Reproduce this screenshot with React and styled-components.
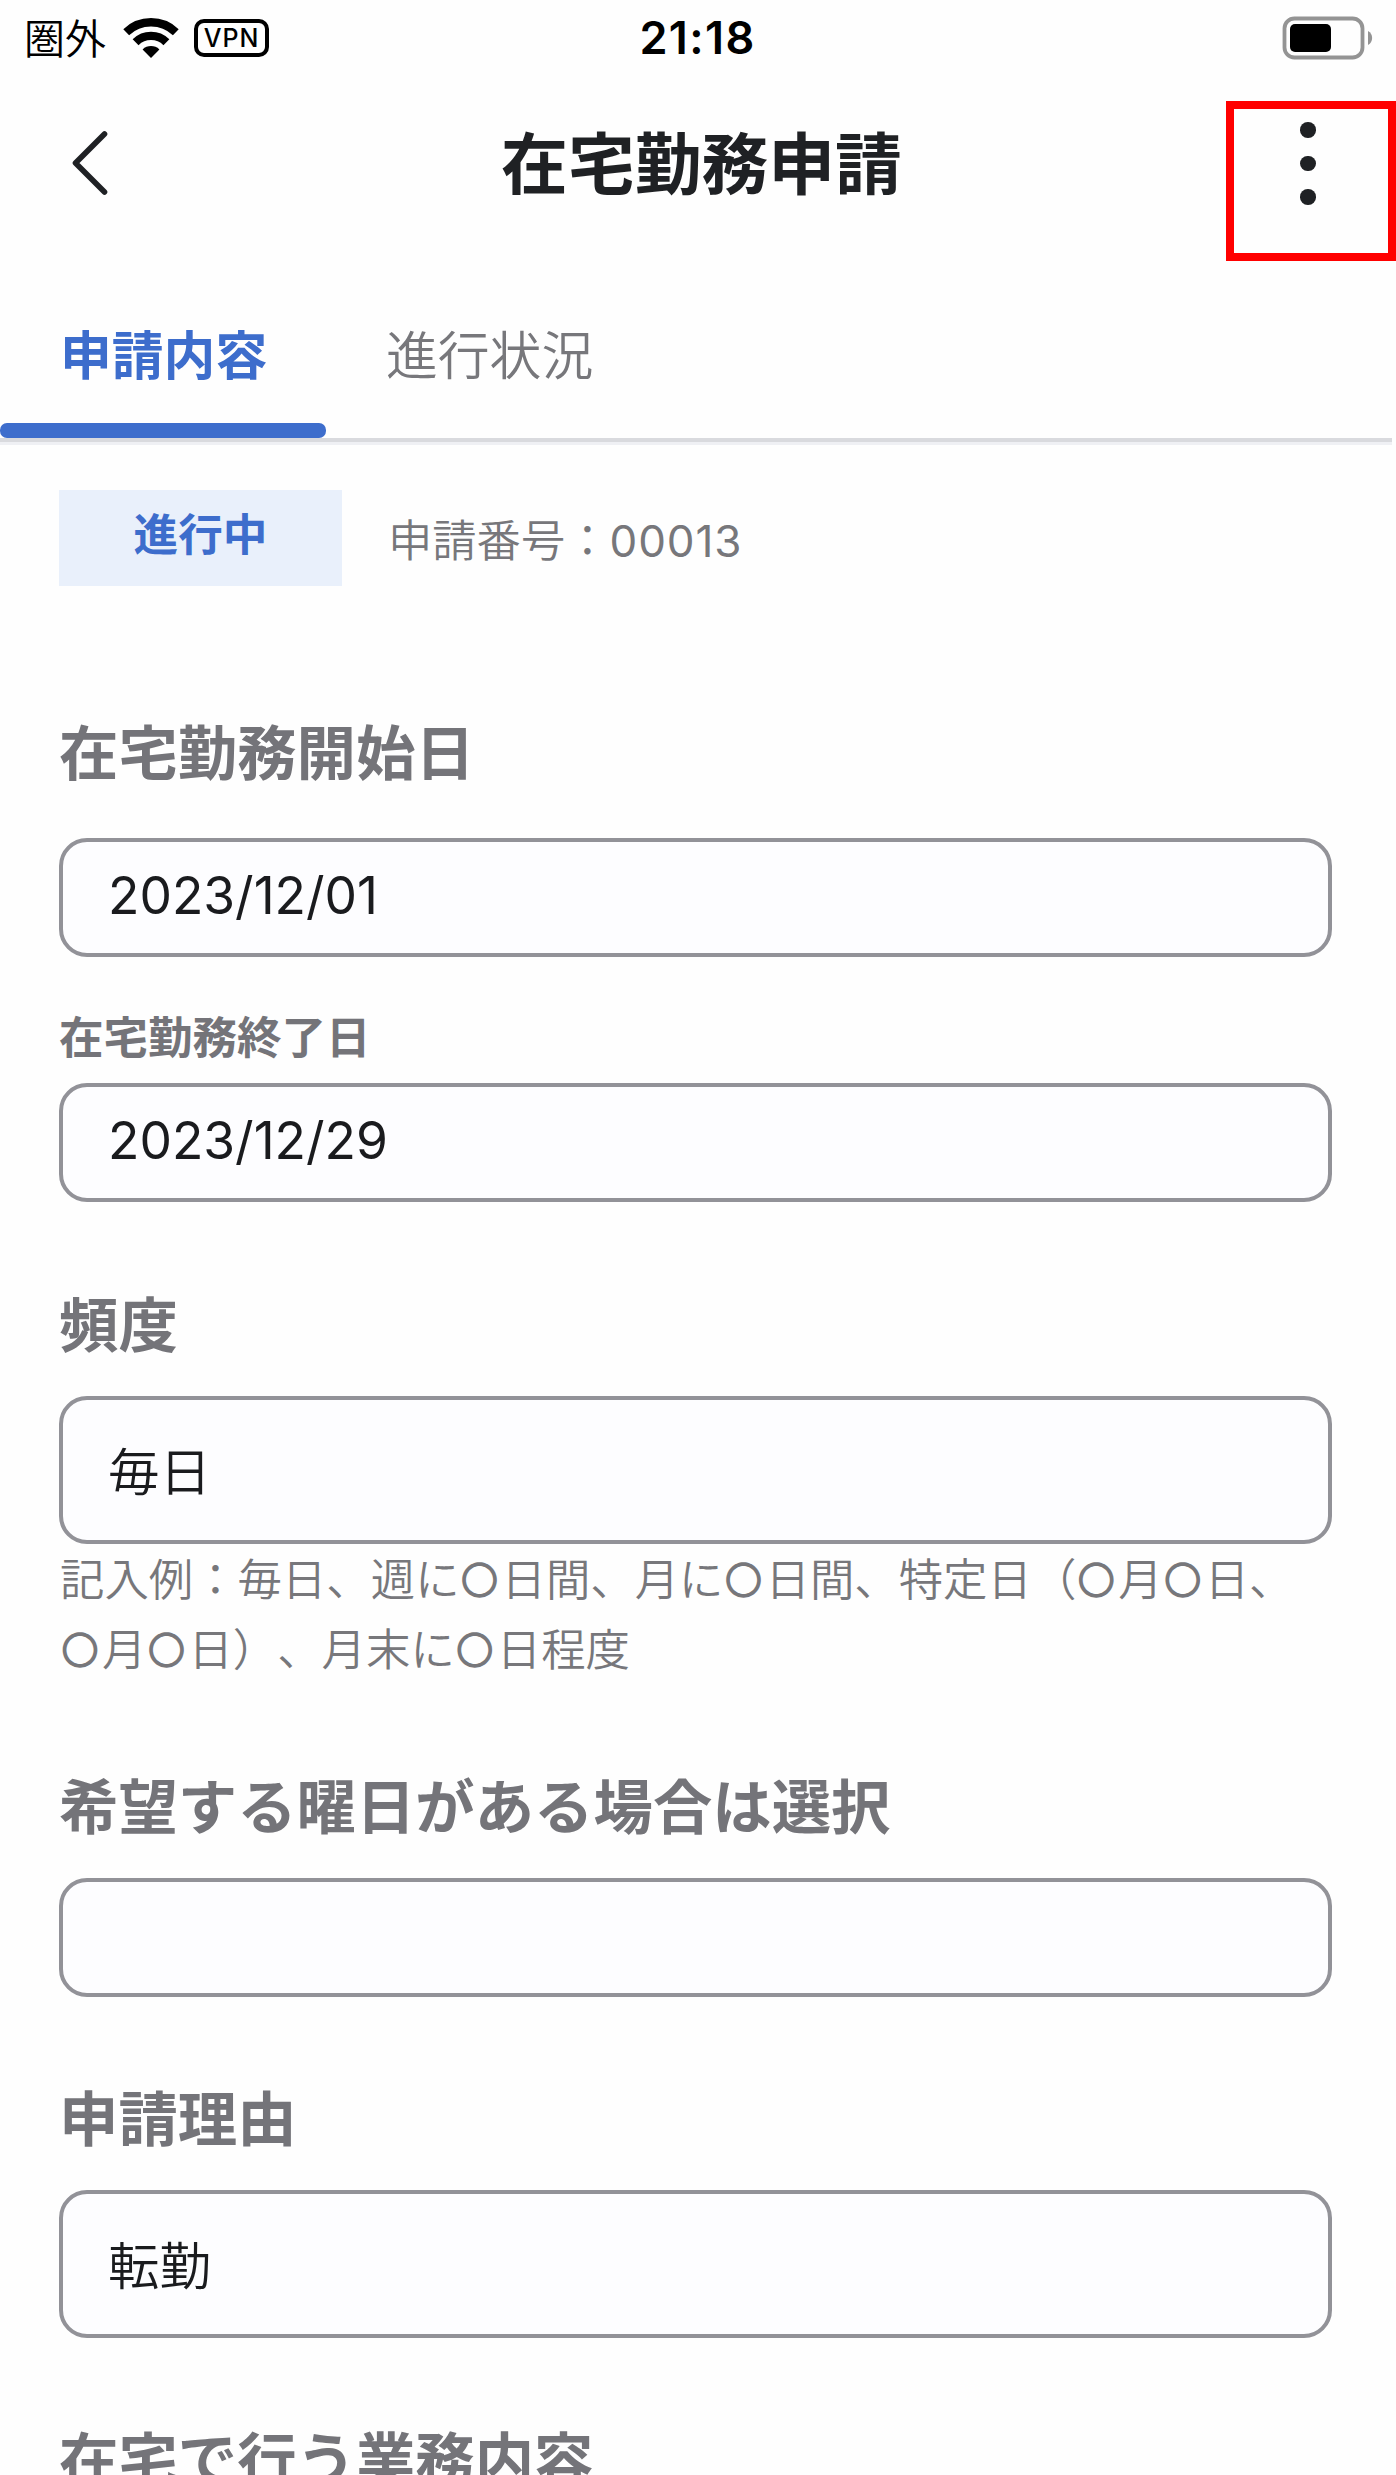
import styled, { createGlobalStyle } from "styled-components";

const App = () => {
  return (
    <Wrapper>
      <GlobalStyle />
      <StatusBar>
        <StatusLeft>
          <Carrier>圏外</Carrier>
          <WifiIcon />
          <Vpn>VPN</Vpn>
        </StatusLeft>
        <Clock>21:18</Clock>
        <StatusRight>
          <BatteryIcon />
        </StatusRight>
      </StatusBar>

      <Header>
        <BackButton aria-label="戻る">
          <svg width="40" height="70" viewBox="0 0 40 70" fill="none">
            <path d="M34.5 6 L5.5 35 L34.5 64" stroke="#1f2124" strokeWidth="5.6" strokeLinecap="round" strokeLinejoin="round" />
          </svg>
        </BackButton>
        <Title>在宅勤務申請</Title>
        <MenuButton aria-label="メニュー">
          <Dot />
          <Dot />
          <Dot />
        </MenuButton>
      </Header>

      <Tabs>
        <Tab $active>申請内容</Tab>
        <Tab>進行状況</Tab>
      </Tabs>
      <Divider />

      <Form>
        <Meta>
          <Badge>進行中</Badge>
          <Number>申請番号：<Digits>00013</Digits></Number>
        </Meta>

        <Heading $top={137} $bottom={55}>在宅勤務開始日</Heading>
        <Field>2023/12/01</Field>
        <Label>在宅勤務終了日</Label>
        <Field>2023/12/29</Field>

        <Heading $top={93}>頻度</Heading>
        <Field $tall>毎日</Field>
        <Hint>
          記入例：毎日、週に<Ring>〇</Ring>日間、月に<Ring>〇</Ring>日間、特定日（<Ring>〇</Ring>月<Ring>〇</Ring>日、
          <br />
          <Ring>〇</Ring>月<Ring>〇</Ring>日）、月末に<Ring>〇</Ring>日程度
        </Hint>

        <Heading $top={94}>希望する曜日がある場合は選択</Heading>
        <Field />

        <Heading>申請理由</Heading>
        <Field $tall>転勤</Field>

        <Heading>在宅で行う業務内容</Heading>
      </Form>
    </Wrapper>
  );
};

const WifiIcon = () => (
  <svg width="56" height="42" viewBox="0 0 56 42">
    <g fill="none" stroke="#000" strokeWidth="8.4">
      <path d="M3.2 15.2 A36 36 0 0 1 52.8 15.2" />
      <path d="M12.6 25.2 A22 22 0 0 1 43.4 25.2" />
    </g>
    <path d="M28 41 L19.6 32.4 A12.4 12.4 0 0 1 36.4 32.4 Z" />
  </svg>
);

const BatteryIcon = () => (
  <svg width="92" height="44" viewBox="0 0 92 44">
    <rect x="2.5" y="2.5" width="78" height="39" rx="10" fill="none" stroke="#949494" strokeWidth="3.8" />
    <rect x="8" y="8" width="41" height="28" rx="5" />
    <path d="M86 15 A8 8 0 0 1 86 29 Z" fill="#949494" />
  </svg>
);

const GlobalStyle = createGlobalStyle`
  * {
    box-sizing: border-box;
  }
  body {
    margin: 0;
    background: #fefefe;
    font-family: Inter, "Noto Sans CJK JP", sans-serif;
    text-spacing-trim: space-all;
  }
`;

const Wrapper = styled.section`
  width: 1396px;
  height: 2475px;
  overflow: hidden;
`;

const StatusBar = styled.div`
  display: grid;
  grid-template-columns: 1fr auto 1fr;
  align-items: center;
  height: 80px;
  padding: 0 22px 5px 24px;
`;

const StatusLeft = styled.div`
  display: flex;
  align-items: center;
`;

const Carrier = styled.span`
  width: 99px;
  padding-bottom: 2px;
  font-size: 41px;
  line-height: 41px;
  font-weight: 350;
  font-family: "Noto Sans CJK JP", sans-serif;
`;

const Vpn = styled.span`
  display: flex;
  align-items: center;
  justify-content: center;
  width: 75px;
  height: 38px;
  margin-left: 15px;
  border: 4px solid #000;
  border-radius: 10px;
  font-size: 25px;
  font-weight: 500;
  letter-spacing: 1px;
`;

const Clock = styled.span`
  margin-right: 3px;
  font-size: 45px;
  font-weight: 600;
  letter-spacing: 1.4px;
`;

const StatusRight = styled.div`
  display: flex;
  justify-content: flex-end;
`;

const Header = styled.header`
  display: grid;
  grid-template-columns: 170px 1fr 170px;
  height: 190px;
  padding-top: 21px;
`;

const BackButton = styled.button`
  align-self: start;
  padding: 27px 0 0 70px;
  border: none;
  background: none;
  text-align: left;
`;

const Title = styled.h1`
  margin: 30px 0 0 7px;
  color: #1f2124;
  font-size: 66.8px;
  line-height: 67px;
  font-weight: 700;
  text-align: center;
`;

const MenuButton = styled.button`
  display: flex;
  flex-direction: column;
  align-items: center;
  gap: 18px;
  height: 160px;
  padding: 13px 6px 0 0;
  border: 8px solid #ff0000;
  background: none;
`;

const Dot = styled.span`
  width: 15.5px;
  height: 15.5px;
  border-radius: 50%;
  background: #1f2124;
`;

const Tabs = styled.nav`
  display: flex;
  height: 168px;
`;

const Tab = styled.div`
  width: 326px;
  padding: 60px 0 0 60px;
  color: ${(props) => (props.$active ? "#3d6dcc" : "#77777b")};
  font-size: 51.8px;
  line-height: 52px;
  font-weight: ${(props) => (props.$active ? 700 : 350)};
  white-space: nowrap;

  &::after {
    content: "";
    display: ${(props) => (props.$active ? "block" : "none")};
    height: 15px;
    margin: 41px 0 0 -60px;
    border-radius: 7px;
    background: #3d6dcc;
  }
`;

const Divider = styled.div`
  width: 1392px;
  height: 7px;
  border-top: 4px solid #d9dade;
  background: #eff0f4;
`;

const Form = styled.main`
  padding: 45px 64px 0 59px;
`;

const Meta = styled.div`
  display: flex;
  align-items: center;
  gap: 46px;
`;

const Badge = styled.span`
  width: 283px;
  height: 96px;
  padding-top: 20px;
  background: #e9f0fb;
  color: #3d6dcc;
  font-size: 44.6px;
  line-height: 50px;
  font-weight: 700;
  text-align: center;
`;

const Number = styled.span`
  padding-top: 5px;
  color: #77777b;
  font-size: 44.3px;
  line-height: 50px;
  font-weight: 350;
`;

const Digits = styled.span`
  font-size: 44px;
  font-weight: 400;
  letter-spacing: 0.9px;
`;

const Heading = styled.h2`
  margin: ${(props) => props.$top || 92}px 0 ${(props) => props.$bottom || 41}px;
  color: #747479;
  font-size: 59.4px;
  line-height: 60px;
  font-weight: 700;
  white-space: nowrap;
`;

const Label = styled.h3`
  margin: 59px 0 23px;
  color: #747479;
  font-size: 44.5px;
  line-height: 44px;
  font-weight: 700;
`;

const Field = styled.div`
  display: flex;
  align-items: center;
  height: ${(props) => (props.$tall ? 148 : 119)}px;
  padding: ${(props) => (props.$tall ? "3px 45px 0" : "0 45px 6px")};
  border: 4px solid #929298;
  border-radius: 28px;
  background: #fdfdff;
  color: #1a1b1e;
  font-size: 51.5px;
  line-height: 52px;
  font-weight: ${(props) => (props.$tall ? 350 : 400)};
`;

const Hint = styled.p`
  margin: 1px 0 -2px;
  padding-left: 1px;
  color: #77777b;
  font-size: 44.4px;
  line-height: 70px;
  font-weight: 350;
  white-space: nowrap;
`;

// the counting circle is smaller and a little heavier than the text round it
const Ring = styled.span`
  margin-left: 1px;
  font-size: 38px;
  line-height: 1;
  font-weight: 500;
  letter-spacing: 3px;
  vertical-align: 2px;
`;

export default App;
